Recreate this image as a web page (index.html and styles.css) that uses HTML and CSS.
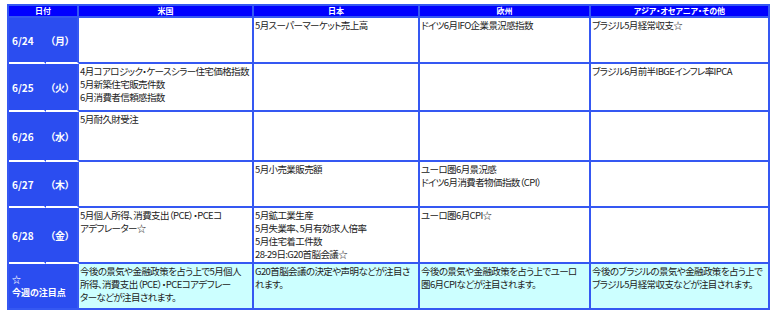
FILE: index.html
```html
<!DOCTYPE html>
<html lang="ja">
<head>
<meta charset="utf-8">
<link rel="stylesheet" href="styles.css">
</head>
<body>
<table class="cal">
  <colgroup>
    <col class="c-date"><col class="c-wd"><col class="c-us"><col class="c-jp"><col class="c-eu"><col class="c-as">
  </colgroup>
  <thead>
    <tr class="hd">
      <th colspan="2">日付</th><th>米国</th><th>日本</th><th>欧州</th><th>アジア・オセアニア・その他</th>
    </tr>
  </thead>
  <tbody>
    <tr class="r1">
      <td class="d">6/24</td><td class="w">（月）</td>
      <td></td><td>5月スーパーマーケット売上高</td><td>ドイツ6月IFO企業景況感指数</td><td>ブラジル5月経常収支☆</td>
    </tr>
    <tr class="r2">
      <td class="d">6/25</td><td class="w">（火）</td>
      <td>4月コアロジック・ケースシラー住宅価格指数<br>5月新築住宅販売件数<br>6月消費者信頼感指数</td><td></td><td></td><td>ブラジル6月前半IBGEインフレ率IPCA</td>
    </tr>
    <tr class="r3">
      <td class="d">6/26</td><td class="w">（水）</td>
      <td>5月耐久財受注</td><td></td><td></td><td></td>
    </tr>
    <tr class="r4">
      <td class="d">6/27</td><td class="w">（木）</td>
      <td></td><td>5月小売業販売額</td><td>ユーロ圏6月景況感<br>ドイツ6月消費者物価指数（CPI）</td><td></td>
    </tr>
    <tr class="r5">
      <td class="d">6/28</td><td class="w">（金）</td>
      <td>5月個人所得、消費支出（PCE）・PCEコ<br>アデフレーター☆</td><td>5月鉱工業生産<br>5月失業率、5月有効求人倍率<br>5月住宅着工件数<br>28-29日:G20首脳会議☆</td><td>ユーロ圏6月CPI☆</td><td></td>
    </tr>
    <tr class="r6 note">
      <td class="lbl" colspan="2">☆<br>今週の注目点</td>
      <td>今後の景気や金融政策を占う上で5月個人<br>所得、消費支出（PCE）・PCEコアデフレー<br>ターなどが注目されます。</td>
      <td>G20首脳会議の決定や声明などが注目さ<br>れます。</td>
      <td>今後の景気や金融政策を占う上でユーロ<br>圏6月CPIなどが注目されます。</td>
      <td>今後のブラジルの景気や金融政策を占う上で<br>ブラジル5月経常収支などが注目されます。</td>
    </tr>
  </tbody>
</table>
</body>
</html>
```

FILE: styles.css
```css
html, body {
  margin: 0;
  padding: 0;
  background: #ffffff;
}
body {
  padding: 4px 0 0 7px;
  font-family: "Noto Sans CJK JP", "Noto Sans", sans-serif;
  font-feature-settings: "palt";
  color: #222;
}
.cal {
  border-collapse: separate;
  border-spacing: 0;
  table-layout: fixed;
  width: 761px;
  border-top: 2px solid #3558f2;
  border-left: 2px solid #3558f2;
  font-size: 9.5px;
  line-height: 13px;
}
.c-date { width: 37px; }
.c-wd { width: 33px; }
.c-us { width: 175px; }
.c-jp { width: 166px; }
.c-eu { width: 171px; }
.c-as { width: 179px; }

.cal th, .cal td {
  border-right: 2px solid #3558f2;
  border-bottom: 2px solid #3558f2;
  padding: 1px 0 0 1px;
  vertical-align: top;
  text-align: left;
  white-space: nowrap;
  overflow: hidden;
  letter-spacing: -0.6px;
}
.hd th {
  background: #0000ff;
  color: #ffffff;
  font-size: 8px;
  line-height: 10px;
  height: 10px;
  font-weight: 700;
  text-align: center;
  padding: 0;
  letter-spacing: 0;
}
.r1 td { height: 43px; }
.r2 td { height: 45px; }
.r3 td { height: 47px; }
.r4 td { height: 43px; }
.r5 td { height: 53px; }
.r6 td { height: 43px; }

.cal td.d, .cal td.w, .cal td.lbl {
  background: #2b4df0;
  color: #ffffff;
  font-weight: 700;
  vertical-align: middle;
  font-size: 10px;
  letter-spacing: 0;
  border-bottom: 2px solid #ffffff;
  padding-top: 0;
}
.cal td.d {
  border-right: 2px solid #2b4df0;
  padding-left: 3px;
}
.cal td.w {
  padding-left: 4px;
}
.cal td.lbl {
  border-bottom: 2px solid #3558f2;
  font-size: 9px;
  line-height: 13px;
  padding-left: 3px;
}
.note td {
  background: #ccffff;
}
```
